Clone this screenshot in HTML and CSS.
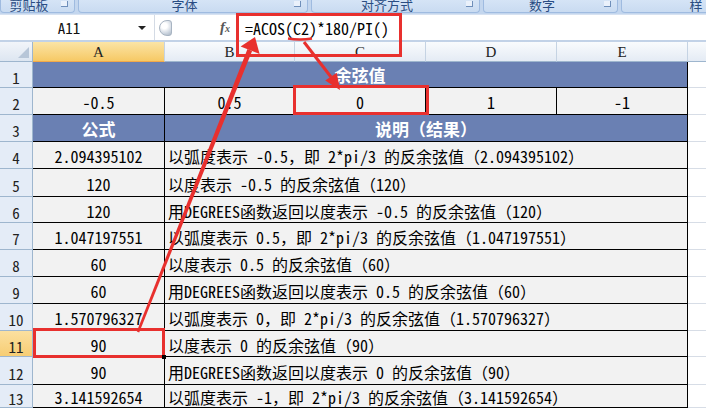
FILE: index.html
```html
<!DOCTYPE html>
<html>
<head>
<meta charset="utf-8">
<link rel="stylesheet" href="styles.css">
</head>
<body>
<div class="app">
  <div class="ribbon">
    <div class="grp g1"><span class="lbl">剪贴板</span><i class="launch"></i></div>
    <div class="grp g2"><span class="lbl">字体</span><i class="launch"></i></div>
    <div class="grp g3"><span class="lbl">对齐方式</span><i class="launch"></i></div>
    <div class="grp g4"><span class="lbl">数字</span><i class="launch"></i></div>
    <div class="grp g5"><span class="lbl">样</span></div>
  </div>
  <div class="fbar">
    <div class="namebox"><span class="name">A11</span><i class="drop"></i></div>
    <div class="fmid"><i class="pill"></i><span class="fx"><i>f</i><sub>x</sub></span></div>
    <div class="formula">=ACOS(C2)*180/PI()</div>
  </div>
  <div class="sheet">
    <div class="corner"><i class="tri"></i></div>
    <div class="ch sel">A</div>
    <div class="ch">B</div>
    <div class="ch">C</div>
    <div class="ch">D</div>
    <div class="ch">E</div>
    <div class="ch last"></div>

    <div class="rh">1</div>
    <div class="c hdr span5">余弦值</div>
    <div class="f"></div>

    <div class="rh">2</div>
    <div class="c num">-0.5</div>
    <div class="c num">0.5</div>
    <div class="c num">0</div>
    <div class="c num">1</div>
    <div class="c num">-1</div>
    <div class="f"></div>

    <div class="rh">3</div>
    <div class="c hdr">公式</div>
    <div class="c hdr span4">说明<span class="fw">（</span>结果<span class="fw">）</span></div>
    <div class="f"></div>

    <div class="rh">4</div>
    <div class="c num">2.094395102</div>
    <div class="c txt span4">以弧度表示 -0.5<span class="fw">，</span>即 2*pi/3 的反余弦值<span class="fw">（</span>2.094395102<span class="fw">）</span></div>
    <div class="f"></div>

    <div class="rh">5</div>
    <div class="c num">120</div>
    <div class="c txt span4">以度表示 -0.5 的反余弦值<span class="fw">（</span>120<span class="fw">）</span></div>
    <div class="f"></div>

    <div class="rh">6</div>
    <div class="c num">120</div>
    <div class="c txt span4">用DEGREES函数返回以度表示 -0.5 的反余弦值<span class="fw">（</span>120<span class="fw">）</span></div>
    <div class="f"></div>

    <div class="rh">7</div>
    <div class="c num">1.047197551</div>
    <div class="c txt span4">以弧度表示 0.5<span class="fw">，</span>即 2*pi/3 的反余弦值<span class="fw">（</span>1.047197551<span class="fw">）</span></div>
    <div class="f"></div>

    <div class="rh">8</div>
    <div class="c num">60</div>
    <div class="c txt span4">以度表示 0.5 的反余弦值<span class="fw">（</span>60<span class="fw">）</span></div>
    <div class="f"></div>

    <div class="rh">9</div>
    <div class="c num">60</div>
    <div class="c txt span4">用DEGREES函数返回以度表示 0.5 的反余弦值<span class="fw">（</span>60<span class="fw">）</span></div>
    <div class="f"></div>

    <div class="rh">10</div>
    <div class="c num">1.570796327</div>
    <div class="c txt span4">以弧度表示 0<span class="fw">，</span>即 2*pi/3 的反余弦值<span class="fw">（</span>1.570796327<span class="fw">）</span></div>
    <div class="f"></div>

    <div class="rh act">11</div>
    <div class="c num">90</div>
    <div class="c txt span4">以度表示 0 的反余弦值<span class="fw">（</span>90<span class="fw">）</span></div>
    <div class="f"></div>

    <div class="rh">12</div>
    <div class="c num">90</div>
    <div class="c txt span4">用DEGREES函数返回以度表示 0 的反余弦值<span class="fw">（</span>90<span class="fw">）</span></div>
    <div class="f"></div>

    <div class="rh">13</div>
    <div class="c num">3.141592654</div>
    <div class="c txt span4">以弧度表示 -1<span class="fw">，</span>即 2*pi/3 的反余弦值<span class="fw">（</span>3.141592654<span class="fw">）</span></div>
    <div class="f"></div>
  </div>

  <svg class="annot" width="706" height="408" viewBox="0 0 706 408">
    <g fill="none" stroke="#e8302e" stroke-width="3">
      <rect x="237.5" y="14.5" width="163" height="41"/>
      <rect x="294.5" y="86.5" width="133" height="27"/>
      <rect x="34.5" y="329.5" width="129" height="27"/>
      <path d="M288 38.5 Q300 40.5 312 38.5" stroke-width="2.5"/>
      <path d="M304 42 L331 77" stroke-width="3"/>
    </g>
    <g fill="#e8302e">
      <polygon points="247.5,49.1 252.1,50.9 139.2,332.4 136.8,331.6"/>
      <polygon points="255,37 259.6,54 240.6,46.4"/>
      <polygon points="340,90 325.2,80.6 336.8,72.8"/>
    </g>
    <rect x="162" y="355" width="4" height="4" fill="#000"/>
  </svg>
</div>
</body>
</html>
```

FILE: styles.css
```css
* { box-sizing: border-box; }
html, body { margin: 0; padding: 0; }
body { width: 706px; height: 408px; overflow: hidden; background: #fff; }

.app {
  position: relative;
  width: 706px;
  height: 408px;
  overflow: hidden;
  font-family: "Noto Sans CJK SC", sans-serif;
  font-feature-settings: "hwid" 1;
}
.fw { font-feature-settings: "hwid" 0; }

/* ribbon */
.ribbon {
  height: 14px;
  display: flex;
  gap: 3px;
  background: #c3d6ee;
  overflow: hidden;
}
.grp {
  flex: none;
  display: flex;
  align-items: flex-start;
  height: 13px;
  background: linear-gradient(#d5e4f6, #c9dbf1);
  border: 1px solid #9fbbe0;
  border-top: none;
  border-radius: 0 0 4px 4px;
  overflow: hidden;
}
.g1 { width: 75px; }
.g2 { width: 230px; }
.g3 { width: 169px; }
.g4 { width: 135px; }
.g5 { width: 150px; }
.lbl {
  flex: 1;
  text-align: center;
  font-size: 13px;
  line-height: 13px;
  margin-top: -2px;
  color: #2a4d83;
}
.launch {
  flex: none;
  width: 7px;
  height: 6px;
  margin: 1px 6px 0 4px;
  border: 1px solid #6f8fba;
  border-top: none;
  border-left: none;
  background: #eaf1fb;
}

/* formula bar */
.fbar {
  height: 28px;
  display: flex;
  background: #fff;
  border-top: 1px solid #d7e2f1;
  border-bottom: 2px solid #c2d2e7;
}
.namebox {
  width: 155px;
  display: flex;
  align-items: center;
  border-right: 1px solid #d4dbe5;
}
.name {
  flex: 1;
  text-align: center;
  font-size: 15px;
  color: #111;
}
.drop {
  width: 0; height: 0;
  margin-right: 8px;
  border-left: 4px solid transparent;
  border-right: 4px solid transparent;
  border-top: 4px solid #222;
}
.fmid {
  width: 82px;
  display: flex;
  align-items: center;
  justify-content: space-between;
  padding: 0 7px 0 4px;
}
.pill {
  width: 13px;
  height: 16px;
  border-radius: 8px 3px 3px 8px;
  background: radial-gradient(circle at 40% 35%, #ffffff 0 25%, #c9d2dd 70%, #aab6c4 100%);
  border: 1px solid #a8b4c2;
}
.fx {
  font-family: "Liberation Serif", serif;
  font-size: 15px;
  font-weight: bold;
  color: #585858;
  line-height: 1;
}
.fx sub { font-size: 10px; vertical-align: baseline; font-style: italic; }
.formula {
  flex: 1;
  font-size: 16px;
  line-height: 26px;
  padding-left: 8px;
  color: #000;
}

/* sheet */
.sheet {
  display: grid;
  grid-template-columns: 33px 132px 130px 131px 131px 131px 18px;
  grid-template-rows: 20px 26px 27px 27px 27px 28px 26px 27px 27px 27px 27px 26px 28px 23px;
}
.corner {
  position: relative;
  background: linear-gradient(#f2f5fa, #dde6f1);
  border-right: 1px solid #9eb6ce;
  border-bottom: 1px solid #9eb6ce;
}
.tri {
  position: absolute;
  right: 3px;
  bottom: 3px;
  width: 0; height: 0;
  border-left: 11px solid transparent;
  border-bottom: 11px solid #b7c6d8;
}
.ch {
  display: flex;
  align-items: center;
  justify-content: center;
  background: linear-gradient(#f9fbfd, #e4ebf4);
  border-right: 1px solid #c5d3e3;
  border-bottom: 1px solid #9eb6ce;
  font-family: "Liberation Serif", serif;
  font-feature-settings: normal;
  font-size: 15px;
  color: #222;
  padding-top: 1px;
}
.ch.sel {
  background: linear-gradient(#fbe4a6, #f6c965);
  border-bottom: 1px solid #f2a94a;
}
.rh {
  display: flex;
  align-items: center;
  justify-content: center;
  background: #e4ecf7;
  border-right: 1px solid #9eb6ce;
  border-bottom: 1px solid #9eb6ce;
  font-size: 15px;
  color: #222;
  padding-top: 5px;
}
.rh.act { background: linear-gradient(#fbe0a0, #f7cd73); }
.c {
  display: flex;
  align-items: center;
  background: #f2f2f2;
  border-right: 1px solid #000;
  border-bottom: 1px solid #000;
  font-size: 16px;
  color: #000;
  white-space: pre;
  overflow: hidden;
  padding-top: 2px;
}
.num { justify-content: center; }
.txt { padding-left: 3px; }
.hdr {
  justify-content: center;
  background: #6a80b3;
  color: #fff;
  font-weight: bold;
  font-size: 17px;
  padding-top: 0;
}
.span5 { grid-column: span 5; }
.span4 { grid-column: span 4; }
.f {
  background: #fff;
  border-bottom: 1px solid #d7dde6;
}
.ch.last { border-right: none; }

.annot {
  position: absolute;
  left: 0;
  top: 0;
  pointer-events: none;
}
```
